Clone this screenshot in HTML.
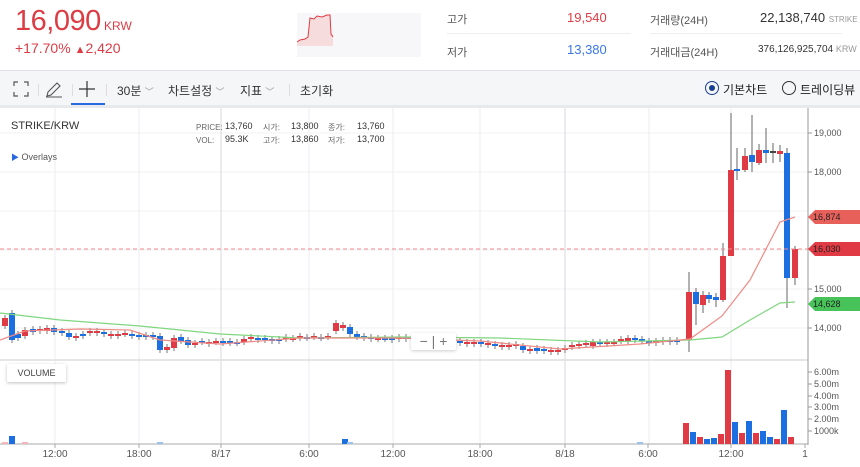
<!DOCTYPE html>
<html><head><meta charset="utf-8"><style>
*{margin:0;padding:0;box-sizing:border-box}
body{width:860px;height:467px;overflow:hidden;background:#fff;font-family:"Liberation Sans","Noto Sans CJK KR",sans-serif;position:relative;color:#333}
.a{position:absolute;white-space:nowrap}
</style></head><body>
<div class="a" style="left:15px;top:5px;font-size:29px;color:#dd3c44;letter-spacing:-0.5px">16,090</div>
<div class="a" style="left:104px;top:19px;font-size:12px;color:#dd3c44">KRW</div>
<div class="a" style="left:15px;top:40px;font-size:14px;color:#dd3c44">+17.70% <span style="font-size:11px">▲</span>2,420</div>
<div class="a" style="left:297px;top:13px;width:124px;height:44px;background:#f7f7f9"></div>
<svg class="a" style="left:297px;top:13px" width="40" height="36"><path d="M0 29 L3 27 L8 26 L11 24 L13 5 L17 6 L20 3 L25 4 L30 2 L33 2 L34 21 L36 21 L36 33 L0 33Z" fill="#f7dcdd"/><path d="M0 29 L3 27 L8 26 L11 24 L13 5 L17 6 L20 3 L25 4 L30 2 L33 2 L34 21 L36 24" fill="none" stroke="#dd3c44" stroke-width="1"/></svg>
<div class="a" style="left:447px;top:11px;font-size:11px;color:#555">고가</div>
<div class="a" style="left:447px;top:44px;font-size:11px;color:#555">저가</div>
<div class="a" style="left:567px;top:10px;font-size:13px;color:#dd3c44">19,540</div>
<div class="a" style="left:567px;top:42px;font-size:13px;color:#3b78e7">13,380</div>
<div class="a" style="left:447px;top:33px;width:184px;border-top:1px solid #eee"></div>
<div class="a" style="left:650px;top:12px;font-size:11px;color:#555">거래량(24H)</div>
<div class="a" style="left:650px;top:44px;font-size:11px;color:#555">거래대금(24H)</div>
<div class="a" style="left:760px;top:10px;font-size:13px;color:#333">22,138,740 <span style="font-size:8px;color:#999">STRIKE</span></div>
<div class="a" style="left:758px;top:44px;font-size:10px;color:#333">376,126,925,704 <span style="font-size:9px;color:#999">KRW</span></div>
<div class="a" style="left:650px;top:33px;width:192px;border-top:1px solid #eee"></div>
<div class="a" style="left:0;top:70px;width:860px;height:38px;background:#f5f6f8;border-top:1px solid #e2e3e6;border-bottom:3px solid #e8e9ec"></div>
<svg class="a" style="left:13px;top:81px" width="16" height="16" fill="none" stroke="#555" stroke-width="1.2"><path d="M1 5V1H5M11 1H15V5M15 11V15H11M5 15H1V11"/></svg>
<div class="a" style="left:38px;top:84px;height:12px;border-left:1px solid #ddd"></div>
<svg class="a" style="left:45px;top:80px" width="18" height="18" fill="none" stroke="#555" stroke-width="1.1"><path d="M2 16L3 12L12 3L15 6L6 15ZM1 17H17"/></svg>
<div class="a" style="left:72px;top:84px;height:12px;border-left:1px solid #ddd"></div>
<svg class="a" style="left:79px;top:81px" width="16" height="16" stroke="#333" stroke-width="1.2"><path d="M8 0V16M0 8H16"/></svg>
<div class="a" style="left:71px;top:103px;width:34px;height:2px;background:#2a6ae0"></div>
<div class="a" style="left:106px;top:84px;height:12px;border-left:1px solid #ddd"></div>
<div class="a" style="left:117px;top:82px;font-size:12px;color:#333">30분 <span style="color:#999;font-size:9px">﹀</span></div>
<div class="a" style="left:168px;top:82px;font-size:12px;color:#333">차트설정 <span style="color:#999;font-size:9px">﹀</span></div>
<div class="a" style="left:240px;top:82px;font-size:12px;color:#333">지표 <span style="color:#999;font-size:9px">﹀</span></div>
<div class="a" style="left:289px;top:84px;height:12px;border-left:1px solid #ddd"></div>
<div class="a" style="left:300px;top:82px;font-size:12px;color:#333">초기화</div>
<div class="a" style="left:705px;top:81px;width:14px;height:14px;border:1.3px solid #1a3f8f;border-radius:50%"><div style="margin:2.5px;width:6.5px;height:6.5px;border-radius:50%;background:#1a3f8f"></div></div>
<div class="a" style="left:723px;top:81px;font-size:12px;color:#222">기본차트</div>
<div class="a" style="left:782px;top:81px;width:14px;height:14px;border:1.3px solid #333;border-radius:50%"></div>
<div class="a" style="left:800px;top:81px;font-size:12px;color:#222">트레이딩뷰</div>
<svg class="a" style="left:0;top:108px" width="860" height="359" id="c"></svg>
<div class="a" style="left:11px;top:120px;font-size:11px;color:#333">STRIKE/KRW</div>
<div class="a" style="left:196px;top:121px;font-size:8px;color:#666;line-height:13px">PRICE:<br>VOL:</div>
<div class="a" style="left:225px;top:120px;font-size:9px;color:#333;line-height:13px">13,760<br>95.3K</div>
<div class="a" style="left:263px;top:121px;font-size:8px;color:#666;line-height:13px">시가:<br>고가:</div>
<div class="a" style="left:291px;top:120px;font-size:9px;color:#333;line-height:13px">13,800<br>13,860</div>
<div class="a" style="left:328px;top:121px;font-size:8px;color:#666;line-height:13px">종가:<br>저가:</div>
<div class="a" style="left:357px;top:120px;font-size:9px;color:#333;line-height:13px">13,760<br>13,700</div>
<div class="a" style="left:11px;top:152px;font-size:9px;color:#555"><span style="color:#2a6ae0;font-size:8px">▶</span> Overlays</div>
<div class="a" style="left:7px;top:364px;width:59px;height:18px;background:#fff;box-shadow:0 1px 3px rgba(0,0,0,.25);font-size:9px;color:#444;text-align:center;line-height:18px">VOLUME</div>
<div class="a" style="left:411px;top:333px;width:45px;height:17px;background:#fff;box-shadow:0 1px 3px rgba(0,0,0,.2);border-radius:2px;font-size:14px;color:#777;line-height:16px;text-align:center">−&nbsp;|&nbsp;+</div>
<script>
var s='';
function L(x1,y1,x2,y2,c,w,e){s+='<line x1="'+x1+'" y1="'+y1+'" x2="'+x2+'" y2="'+y2+'" stroke="'+c+'" stroke-width="'+(w||1)+'" '+(e||'')+'/>';}
function R(x,y,w,h,c){s+='<rect x="'+x+'" y="'+y+'" width="'+w+'" height="'+h+'" fill="'+c+'"/>';}
function T(x,y,t,c,sz,a){s+='<text x="'+x+'" y="'+y+'" fill="'+(c||'#555')+'" font-size="'+(sz||9)+'" text-anchor="'+(a||'start')+'" font-family="Liberation Sans,sans-serif">'+t+'</text>';}
var o=-108;
[133,172,211,250,289,328].forEach(function(y){L(0,y+o,808,y+o,'#f0f0f2');});
[55,139,309,393,480,649,731].forEach(function(x){L(x,0,x,337,'#eeeef0');});
[221,565].forEach(function(x){L(x,0,x,337,'#d8d8dc');});
L(0,360+o,808,360+o,'#ddd',1.5);
L(0,444+o,808,444+o,'#aaa');
L(808,0,808,337,'#999');
var RED='#e03a45',BLU='#1c6fe0';
var base=[
[5,318,326,RED],[12,313,340,BLU],[18,334,338,BLU],[25,330,336,RED],[33,329,332,BLU],[40,329,331,RED],[47,328,331,RED],[54,328,332,BLU],[62,331,333,BLU],[69,333,337,BLU],[76,336,338,RED],[83,334,336,BLU],[90,331,333,RED],[97,331,333,RED],[104,332,334,BLU],[111,334,336,RED],[118,334,336,RED],[125,333,334,RED],[132,334,336,BLU],[139,335,337,BLU],[146,335,337,BLU],[153,335,337,BLU],[160,336,350,BLU],[167,347,350,RED],[174,338,348,RED],[181,337,341,BLU],[188,340,345,BLU],[195,343,345,RED],[202,341,342,BLU],[209,342,344,RED],[216,341,342,RED],[223,341,343,BLU],[230,341,343,BLU],[237,342,343,BLU],[244,339,342,RED],[251,337,339,RED],[258,338,340,BLU],[265,338,340,BLU],[272,339,341,BLU],[279,339,341,BLU],[286,337,339,RED],[293,338,339,RED],[300,336,338,RED],[307,337,338,BLU],[314,336,337,RED],[321,337,338,BLU],[328,336,337,RED],[336,323,331,RED],[343,325,328,RED],[350,327,334,BLU],[357,334,337,BLU],[364,336,338,BLU],[371,337,339,BLU],[378,338,339,RED],[385,338,339,BLU],[392,338,340,BLU],[399,337,339,RED],[406,337,339,BLU],[460,341,343,BLU],[467,342,344,RED],[474,342,344,RED],[481,342,344,BLU],[488,343,345,RED],[495,344,346,BLU],[502,345,347,RED],[509,345,347,RED],[516,344,346,RED],[523,346,350,BLU],[530,349,351,RED],[537,348,351,BLU],[544,349,351,BLU],[551,350,352,RED],[558,350,352,RED],[565,348,350,RED],[572,345,347,RED],[579,344,346,RED],[586,343,344,RED],[593,342,346,RED],[600,342,344,BLU],[607,342,344,RED],[614,342,343,RED],[621,339,341,RED],[628,338,341,RED],[635,338,340,BLU],[642,339,341,BLU],[649,341,343,BLU],[656,341,343,RED],[663,340,342,RED],[670,340,342,BLU],[677,340,342,BLU]];
base.forEach(function(c){L(c[0],c[1]-3+o,c[0],c[2]+3+o,'#777');R(c[0]-3,c[1]+o,6,Math.max(2,c[2]-c[1]),c[3]);});
var big=[[689,292,340,272,352,RED],[696,292,304,288,325,BLU],[703,295,305,291,313,RED],[709,295,299,292,303,BLU],[716,297,300,293,307,BLU],[723,256,300,243,302,RED],[731,170,256,113,256,RED],[737,169,171,148,180,BLU],[745,156,170,148,172,RED],[752,155,162,115,172,BLU],[759,150,163,144,165,RED],[766,150,153,128,163,BLU],[773,151,153,143,163,'#444'],[780,151,154,145,162,RED],[787,153,278,148,308,BLU],[795,249,278,246,285,RED]];
big.forEach(function(c){L(c[0],c[3]+o,c[0],c[4]+o,'#666');R(c[0]-3,c[1]+o,6,c[2]-c[1],c[5]);});
function P(pts,c){var d='';pts.forEach(function(p,i){d+=(i?'L':'M')+p[0]+' '+(p[1]+o)+' ';});s+='<path d="'+d+'" fill="none" stroke="'+c+'" stroke-width="1.2"/>';}
P([[0,313],[60,320],[140,326],[220,334],[300,338],[400,337],[500,338],[600,342],[690,340],[722,337],[750,320],[780,303],[795,302]],'#7fd67f');
P([[0,340],[25,331],[80,329],[130,330],[160,340],[220,344],[300,338],[400,338],[480,341],[560,349],[640,344],[690,339],[722,316],[750,280],[780,222],[795,217]],'#ef8a84');
L(0,249+o,808,249+o,'#f08a90',1,'stroke-dasharray="4 3"');
[[133,'19,000'],[172,'18,000'],[289,'15,000'],[328,'14,000']].forEach(function(a){L(808,a[0]+o,812,a[0]+o,'#999');T(814,a[0]+3+o,a[1]);});
function Tag(y,t,c){s+='<path d="M808 '+(y+o)+' L815 '+(y-7+o)+' H860 V'+(y+7+o)+' H815Z" fill="'+c+'"/>';T(813,y+3+o,t,'#222',9);}
Tag(217,'16,874','#e8605a');Tag(249,'16,030','#e03a45');Tag(304,'14,628','#47c35a');
[[372,'6.00m'],[384,'5.00m'],[396,'4.00m'],[407,'3.00m'],[419,'2.00m'],[431,'1000k']].forEach(function(a){L(808,a[0]+o,812,a[0]+o,'#999');T(814,a[0]+3+o,a[1]);});
var vol=[[686,423,RED],[693,432,BLU],[700,437,RED],[707,439,BLU],[714,438,BLU],[721,434,RED],[728,370,RED],[735,422,BLU],[742,433,RED],[749,421,BLU],[756,433,RED],[763,431,BLU],[770,437,BLU],[777,439,RED],[784,410,BLU],[791,437,RED],[12,436,BLU],[345,439,BLU],[5,442,'#f4b6ba'],[25,442,'#f4b6ba'],[160,442,'#9cc2f4'],[350,442,'#9cc2f4'],[640,442,'#9cc2f4']];
vol.forEach(function(v){R(v[0]-3,v[1]+o,6,444-v[1],v[2]);});
[[55,'12:00'],[139,'18:00'],[221,'8/17'],[309,'6:00'],[393,'12:00'],[480,'18:00'],[565,'8/18'],[648,'6:00'],[731,'12:00'],[805,'1']].forEach(function(a){L(a[0],444+o,a[0],448+o,'#aaa');T(a[0],457+o,a[1],'#555',10,'middle');});
document.getElementById('c').innerHTML=s;
</script>
</body></html>
